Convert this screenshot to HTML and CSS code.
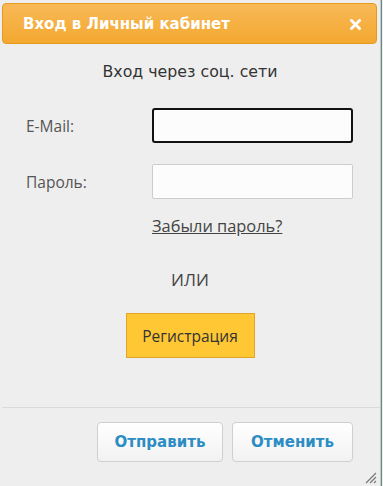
FILE: index.html
```html
<!DOCTYPE html>
<html lang="ru">
<head>
<meta charset="utf-8">
<title>Вход в Личный кабинет</title>
<link rel="stylesheet" href="styles.css">
</head>
<body>
<div class="window">
  <div class="titlebar">
    <span class="title">Вход в Личный кабинет</span>
    <span class="close">
      <svg width="11" height="11" viewBox="0 0 11 11"><path d="M1.5 1.5 L9.5 9.5 M9.5 1.5 L1.5 9.5" stroke="#fff" stroke-width="2.8" stroke-linecap="square"/></svg>
    </span>
  </div>
  <div class="content">
    <div class="social">Вход через соц. сети</div>
    <div class="row row-email">
      <label class="label">E-Mail:</label>
      <div class="input focused"></div>
    </div>
    <div class="row row-pass">
      <label class="label">Пароль:</label>
      <div class="input"></div>
    </div>
    <div class="forgot-row"><a class="forgot" href="#">Забыли пароль?</a></div>
    <div class="or">ИЛИ</div>
    <div class="reg-row"><span class="reg">Регистрация</span></div>
  </div>
  <div class="footer">
    <span class="btn">Отправить</span>
    <span class="btn btn-cancel">Отменить</span>
  </div>
  <svg class="grip" width="14" height="14" viewBox="0 0 14 14"><path d="M13 3 L3 13 M13 7 L7 13 M13 11 L11 13" stroke="#777" stroke-width="1.2"/></svg>
</div>
</body>
</html>
```
FILE: styles.css
```css
html, body {
  margin: 0;
  padding: 0;
  background: #eeeeee;
}
.window {
  position: relative;
  width: 381px;
  height: 486px;
  border-right: 1px solid #c8c8c8;
  box-shadow: 1px 0 0 #5a8f8c;
  box-sizing: border-box;
  display: flex;
  flex-direction: column;
}
.titlebar {
  margin: 3px 3px 0 2px;
  height: 41px;
  box-sizing: border-box;
  border: 1px solid #e5991f;
  border-radius: 4px;
  background: linear-gradient(#f8b957, #f4a830);
  display: flex;
  align-items: center;
  justify-content: space-between;
  padding: 0 15px 0 20px;
}
.title {
  font-family: "DejaVu Sans", sans-serif;
  font-weight: bold;
  font-size: 15px;
  color: #fff;
}
.close {
  display: flex;
  margin-top: 2px;
}
.content {
  display: flex;
  flex-direction: column;
  font-family: "Open Sans", sans-serif;
  color: #555;
}
.social {
  font-family: "DejaVu Sans", sans-serif;
  font-size: 15.8px;
  color: #333;
  text-align: center;
  margin-top: 18px;
  line-height: 20px;
}
.row {
  display: flex;
  align-items: center;
  height: 35px;
  padding-left: 26px;
}
.row-email { margin-top: 26px; }
.row-pass { margin-top: 21px; }
.label {
  width: 126px;
  font-size: 15.5px;
  color: #555;
}
.input {
  width: 201px;
  height: 35px;
  box-sizing: border-box;
  background: #fcfcfc;
  border: 1px solid #cccccc;
  border-radius: 2px;
}
.input.focused {
  border: 2px solid #111;
  border-radius: 3px;
}
.forgot-row {
  padding-left: 152px;
  margin-top: 17px;
  line-height: 20px;
}
.forgot {
  font-size: 16.4px;
  color: #444;
  text-decoration: underline;
}
.or {
  text-align: center;
  font-size: 17px;
  color: #444;
  margin-top: 33px;
  line-height: 22px;
}
.reg-row {
  display: flex;
  justify-content: center;
  margin-top: 22px;
}
.reg {
  width: 129px;
  height: 45px;
  box-sizing: border-box;
  background: #ffc733;
  border: 1px solid #e0a52a;
  display: flex;
  align-items: center;
  justify-content: center;
  font-size: 15.5px;
  color: #333;
}
.footer {
  margin: 49px 0 0 2px;
  border-top: 1px solid #dadada;
  display: flex;
  justify-content: flex-end;
  gap: 9px;
  padding: 14px 27px 0 0;
}
.btn {
  width: 126px;
  height: 40px;
  box-sizing: border-box;
  border: 1px solid #cfcfcf;
  border-radius: 4px;
  background: linear-gradient(#ffffff, #f2f2f2);
  display: flex;
  align-items: center;
  justify-content: center;
  font-family: "DejaVu Sans", sans-serif;
  font-weight: bold;
  font-size: 15px;
  color: #2b8dc4;
}
.btn-cancel { width: 121px; }
.grip {
  position: absolute;
  right: 3px;
  bottom: 2px;
}
```
